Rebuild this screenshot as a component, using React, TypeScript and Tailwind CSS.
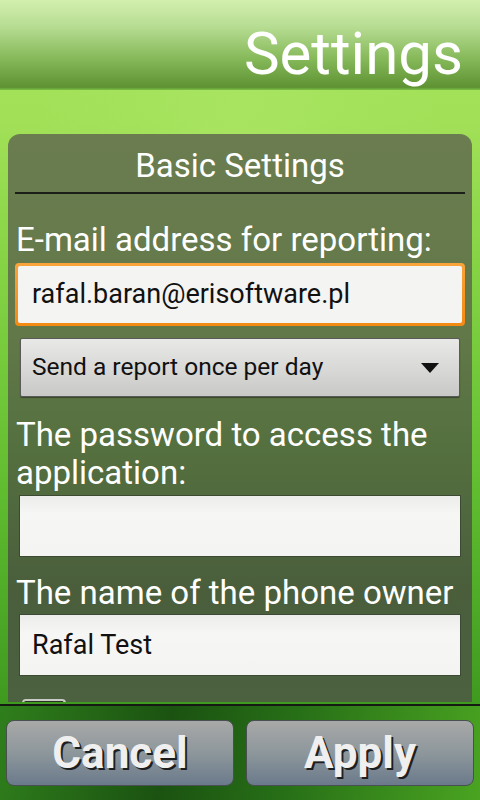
import React from "react";

const font = { fontFamily: "Roboto, 'Noto Sans', sans-serif" };

function Field({ value, focused }: { value?: string; focused?: boolean }) {
  if (focused) {
    return (
      <div className="mx-[7px] h-[63px] rounded-[4px] p-[3px] bg-[linear-gradient(180deg,#f9a43a,#f38a12)]">
        <div className="h-full rounded-[2px] bg-[#f4f4f2] flex items-center pl-[14px] text-[27px] text-[#111]">
          {value}
        </div>
      </div>
    );
  }
  return (
    <div className="mx-[11px] h-[62px] border border-[#3c4a34] bg-[linear-gradient(180deg,#ececea,#f6f6f4_30%,#f4f4f2)] flex items-center pl-[12px] text-[27px] text-[#111]">
      {value}
    </div>
  );
}

export default function App() {
  return (
    <div
      className="w-[480px] h-[800px] overflow-hidden flex flex-col bg-[linear-gradient(180deg,#a6e35c_0px,#a2e058_120px,#86d446_260px,#62be30_480px,#3f9a20_700px)]"
      style={font}
    >
      {/* header */}
      <div className="h-[90px] shrink-0 bg-[linear-gradient(180deg,#d3efae_0%,#b6dc92_30%,#86b95a_65%,#5e9232_97%,#7cc048_100%)] flex items-center justify-end pr-[17px] pt-[18px]">
        <span className="text-[60px] leading-none text-white">Settings</span>
      </div>

      {/* content */}
      <div className="flex-1 min-h-0 px-[8px] pt-[44px] bg-[radial-gradient(ellipse_at_50%_0%,#a8e460_0%,transparent_60%)]">
        <div className="h-[568px] overflow-hidden rounded-t-[12px] bg-[linear-gradient(180deg,#6b7d50_0%,#627849_35%,#55703f_55%,#4a5e3c_80%,#4b613f_100%)]">
          <div className="h-[58px] flex items-end justify-center pb-[6px]">
            <span className="text-[33px] leading-[40px] text-white">Basic Settings</span>
          </div>
          <div className="mx-[7px] h-[2px] bg-[#1c1f18]" />
          <div className="mt-[27px] px-[8px] text-[33px] leading-[38px] text-white whitespace-nowrap">
            E-mail address for reporting:
          </div>
          <div className="mt-[4px]">
            <Field value="rafal.baran@erisoftware.pl" focused />
          </div>
          <div className="mt-[12px] mx-[12px] h-[59px] rounded-[2px] border border-[#5a5a58] bg-[linear-gradient(180deg,#e8e8e6,#d6d6d4_60%,#c8c8c6)] shadow-[0_1px_1px_rgba(0,0,0,0.4)] flex items-center justify-between pl-[11px] pr-[20px]">
            <span className="text-[24.5px] text-[#111]">Send a report once per day</span>
            <svg width="18" height="10" viewBox="0 0 18 10">
              <polygon points="0,0 18,0 9,10" fill="#111" />
            </svg>
          </div>
          <div className="mt-[19px] px-[8px] text-[33px] leading-[38px] text-white">
            The password to access the
            <br />
            application:
          </div>
          <div className="mt-[3px]">
            <Field />
          </div>
          <div className="mt-[17px] px-[8px] text-[33px] leading-[38px] text-white whitespace-nowrap">
            The name of the phone owner
          </div>
          <div className="mt-[2px]">
            <Field value="Rafal Test" />
          </div>
          <div className="mt-[23px] ml-[14px] w-[44px] h-[20px] rounded-t-[4px] border-2 border-[#c8ccc4] border-b-0 bg-[#2a2f28]" />
        </div>
      </div>

      {/* separator */}
      <div className="h-[2px] bg-[#151a12] shrink-0 mt-[2px]" />

      {/* bottom bar */}
      <div className="h-[94px] shrink-0 bg-[linear-gradient(100deg,#2f7e1c_0%,#1b5211_35%,#276f17_60%,#4aa421_100%)] flex gap-[12px] px-[6px] pt-[14px]">
        {["Cancel", "Apply"].map((t) => (
          <div
            key={t}
            className="flex-1 h-[66px] rounded-[8px] border border-[#4a4f52] bg-[linear-gradient(180deg,#a8a8a8_0%,#8d979b_50%,#6b7a8b_100%)] flex items-center justify-center"
          >
            <span className="text-[44px] font-bold text-[#efefef] [text-shadow:2px_2px_0_#1e1e1e]">
              {t}
            </span>
          </div>
        ))}
      </div>
    </div>
  );
}
